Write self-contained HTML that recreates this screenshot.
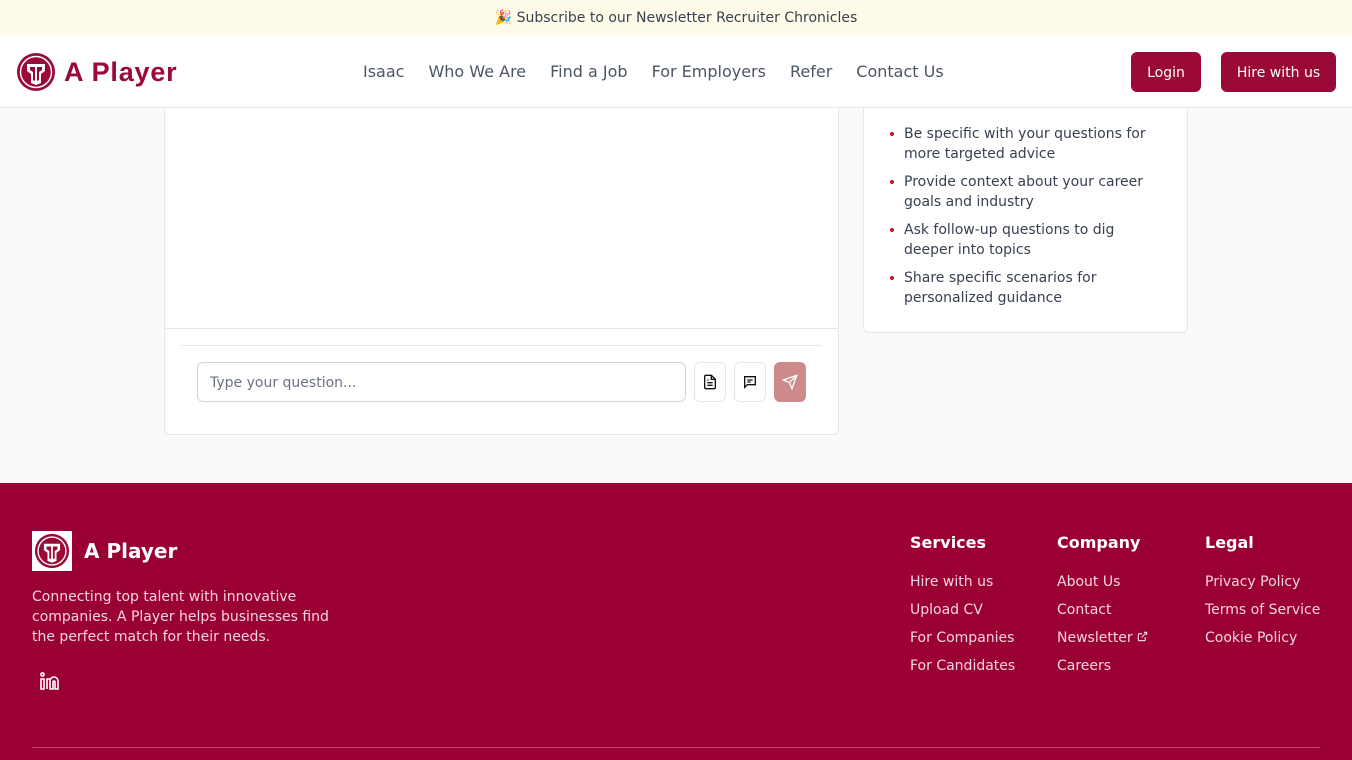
<!DOCTYPE html>
<html><head><meta charset="utf-8">
<style>
*{margin:0;padding:0;box-sizing:border-box}
body{width:1352px;height:760px;overflow:hidden;background:#f9fafb;font-family:"DejaVu Sans","Liberation Sans",sans-serif;color:#374151;position:relative}
.banner{position:absolute;top:0;left:0;width:1352px;height:36px;background:#fefbe8;font-size:14px;color:#374151;text-align:center;line-height:37px;z-index:5}
.hdr{position:absolute;top:36px;left:0;width:1352px;height:72px;background:#fff;border-bottom:1px solid #e5e7eb;z-index:5}
.logo{position:absolute;left:16px;top:16px;display:flex;align-items:center}
.logo span{font-family:"Liberation Sans",sans-serif;font-weight:bold;font-size:27px;color:#9b0a37;margin-left:8px;letter-spacing:0.8px}
.nav{position:absolute;top:0;left:363px;height:70px;display:flex;align-items:center;font-size:16px;color:#4b5563}
.nav a{margin-right:24px}
.btn{position:absolute;top:16px;height:40px;background:#9b0a37;color:#fff;border-radius:6px;font-size:14px;line-height:42px;text-align:center}
.card{position:absolute;background:#fff;border:1px solid #e5e7eb;border-radius:6px}
.tips li{list-style:none;position:relative;padding-left:40px;padding-right:36px;font-size:14px;line-height:20px;margin-bottom:8px;color:#374151}
.tips li:before{content:"";position:absolute;left:26px;top:8px;width:4px;height:4px;border-radius:2px;background:#b91c1c}
.ib{position:absolute;top:362px;width:32px;height:40px;border:1px solid #e5e7eb;border-radius:6px;background:#fff;display:flex;align-items:center;justify-content:center}
.foot{position:absolute;top:483px;left:0;width:1352px;height:277px;background:#9b0035;color:#fff}
.col{position:absolute;top:50px}
.col h4{font-size:16px;font-weight:bold;margin-bottom:20px}
.col div{font-size:14px;color:#f6d5dd;line-height:20px;margin-bottom:8px}
</style></head><body>
<div class="banner"><span style="font-size:14px">🎉</span> Subscribe to our Newsletter Recruiter Chronicles</div>
<div class="hdr">
 <div class="logo">
  <svg width="40" height="40" viewBox="0 0 40 40"><circle cx="20" cy="20" r="19" fill="#9b0a37"/><circle cx="20" cy="20" r="15.5" fill="none" stroke="#fff" stroke-width="1.5"/><path d="M11 12h18v7l-4 3v9l-5 2-5-2v-9l-4-3z" fill="#fff"/><path d="M14 15h5v14l-2-1v-8l-3-2zM26 15h-5v14l2-1v-8l3-2z" fill="#9b0a37"/></svg>
  <span>A Player</span>
 </div>
 <div class="nav"><a>Isaac</a><a>Who We Are</a><a>Find a Job</a><a>For Employers</a><a>Refer</a><a>Contact Us</a></div>
 <div class="btn" style="left:1131px;width:70px">Login</div>
 <div class="btn" style="left:1221px;width:115px">Hire with us</div>
</div>

<div class="card" style="left:164px;top:90px;width:675px;height:345px;border-top:none;border-radius:0 0 6px 6px"></div>
<div style="position:absolute;left:165px;top:328px;width:673px;border-top:1px solid #e5e7eb"></div>
<div style="position:absolute;left:181px;top:345px;width:641px;border-top:1px solid #e5e7eb"></div>
<div style="position:absolute;left:197px;top:362px;width:489px;height:40px;border:1px solid #d1d5db;border-radius:6px;background:#fff;font-size:14px;color:#6b7280;line-height:40px;padding-left:12px">Type your question...</div>
<div class="ib" style="left:694px"><svg width="16" height="16" viewBox="0 0 24 24" fill="none" stroke="#111" stroke-width="2"><path d="M14 2H6a2 2 0 0 0-2 2v16a2 2 0 0 0 2 2h12a2 2 0 0 0 2-2V8z"/><path d="M14 2v6h6M8 13h8M8 17h8M8 9h2"/></svg></div>
<div class="ib" style="left:734px"><svg width="16" height="16" viewBox="0 0 24 24" fill="none" stroke="#111" stroke-width="2"><path d="M4 4h16v12H8l-4 4z"/><path d="M8 9h8M8 12h5"/></svg></div>
<div class="ib" style="left:774px;background:#cd8a8a;border-color:#cd8a8a"><svg width="16" height="16" viewBox="0 0 24 24" fill="none" stroke="#fff" stroke-width="2"><path d="M22 2L11 13M22 2l-7 20-4-9-9-4z"/></svg></div>

<div class="card" style="left:863px;top:90px;width:325px;height:243px;border-top:none;border-radius:0 0 6px 6px">
 <ul class="tips" style="padding-top:34px">
  <li>Be specific with your questions for more targeted advice</li>
  <li>Provide context about your career goals and industry</li>
  <li>Ask follow-up questions to dig deeper into topics</li>
  <li>Share specific scenarios for personalized guidance</li>
 </ul>
</div>

<div class="foot">
 <div style="position:absolute;left:32px;top:48px;display:flex;align-items:center">
  <div style="width:40px;height:40px;background:#fff;display:flex;align-items:center;justify-content:center">
   <svg width="36" height="36" viewBox="0 0 40 40"><circle cx="20" cy="20" r="19" fill="#9b0a37"/><circle cx="20" cy="20" r="15.5" fill="none" stroke="#fff" stroke-width="1.5"/><path d="M11 12h18v7l-4 3v9l-5 2-5-2v-9l-4-3z" fill="#fff"/><path d="M14 15h5v14l-2-1v-8l-3-2zM26 15h-5v14l2-1v-8l3-2z" fill="#9b0a37"/></svg>
  </div>
  <span style="font-size:20px;font-weight:bold;margin-left:12px">A Player</span>
 </div>
 <div style="position:absolute;left:32px;top:104px;width:310px;font-size:14px;line-height:20px;color:#f6d5dd">Connecting top talent with innovative companies. A Player helps businesses find the perfect match for their needs.</div>
 <svg style="position:absolute;left:40px;top:189px" width="20" height="18" viewBox="0 0 20 18" fill="none" stroke="#fff" stroke-width="1.6"><circle cx="2.5" cy="2.5" r="1.6"/><path d="M1 7h3v10H1zM7 17V7h3M10 17V9a4 4 0 0 1 8 0v8h-3V10a1 1 0 0 0-2 0v7z"/></svg>
 <div class="col" style="left:910px"><h4>Services</h4><div>Hire with us</div><div>Upload CV</div><div>For Companies</div><div>For Candidates</div></div>
 <div class="col" style="left:1057px"><h4>Company</h4><div>About Us</div><div>Contact</div><div>Newsletter <svg width="11" height="11" viewBox="0 0 24 24" fill="none" stroke="#f6d5dd" stroke-width="2.5"><path d="M18 13v6a2 2 0 0 1-2 2H5a2 2 0 0 1-2-2V8a2 2 0 0 1 2-2h6M15 3h6v6M10 14L21 3"/></svg></div><div>Careers</div></div>
 <div class="col" style="left:1205px"><h4>Legal</h4><div>Privacy Policy</div><div>Terms of Service</div><div>Cookie Policy</div></div>
 <div style="position:absolute;left:32px;top:264px;width:1288px;border-top:1px solid #c0456a"></div>
</div>
</body></html>
